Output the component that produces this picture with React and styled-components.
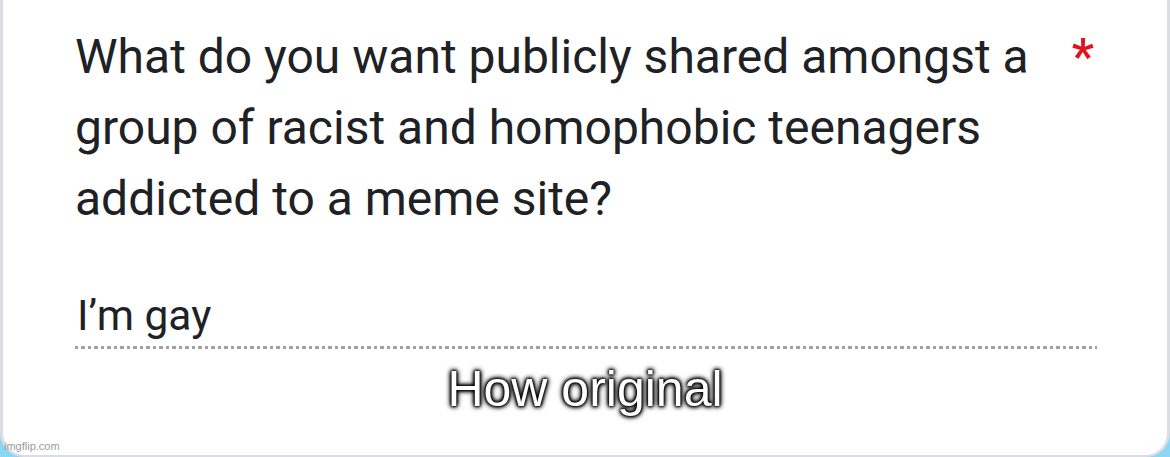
import styled, { createGlobalStyle } from "styled-components";

const GlobalStyle = createGlobalStyle`
  html, body {
    margin: 0;
    padding: 0;
    background: #8ad6f6;
  }
`;

const Page = styled.div`
  width: 1170px;
  height: 457px;
  background: #8ad6f6;
  overflow: hidden;
`;

const Card = styled.div`
  position: relative;
  box-sizing: border-box;
  width: 1170px;
  height: 457px;
  background: #ffffff;
  border-left: 3px solid #dcdde2;
  border-right: 3px solid #dcdde2;
  border-bottom: 2px solid #dcdde2;
  border-radius: 0 0 24px 24px;
  padding: 21px 70px 0 72px;
  font-family: Roboto, "Noto Sans", sans-serif;
  color: #202124;
`;

const QuestionRow = styled.div`
  display: flex;
  justify-content: space-between;
  align-items: flex-start;
`;

const Question = styled.h1`
  margin: 0;
  font-size: 48px;
  font-weight: 400;
  line-height: 71px;
  letter-spacing: 0;
`;

const Required = styled.span`
  color: #e0141e;
  font-size: 50px;
  font-weight: 500;
  line-height: 60px;
  margin-top: 6px;
  margin-right: 3px;
`;

const Answer = styled.div`
  margin-top: 58px;
  font-size: 42.5px;
  line-height: 48px;
  padding-bottom: 9px;
  padding-left: 2px;
  background-image: repeating-linear-gradient(
    to right,
    #a0a0a0 0,
    #a0a0a0 3.5px,
    transparent 3.5px,
    transparent 6.5px
  );
  background-size: 100% 3px;
  background-position: 0 100%;
  background-repeat: no-repeat;
`;

const Caption = styled.div`
  text-align: center;
  margin-top: 12px;
  margin-left: -72px;
  margin-right: -70px;
  font-family: "Liberation Sans", Arial, sans-serif;
  font-size: 50px;
  line-height: 56px;
  color: #ffffff;
  text-shadow: 0 0 2px #000, 0 0 3px #000, 0 0 4px #000, 0 0 5px #000,
    0 0 6px #000;
`;

const Watermark = styled.span`
  position: absolute;
  left: 1px;
  bottom: 3px;
  font-family: "Liberation Sans", Arial, sans-serif;
  font-size: 11px;
  color: #9b9b9b;
`;

export default function App() {
  return (
    <Page>
      <GlobalStyle />
      <Card>
        <QuestionRow>
          <Question>
            What do you want publicly shared amongst a
            <br />
            group of racist and homophobic teenagers
            <br />
            addicted to a meme site?
          </Question>
          <Required>*</Required>
        </QuestionRow>
        <Answer>I’m gay</Answer>
        <Caption>How original</Caption>
        <Watermark>imgflip.com</Watermark>
      </Card>
    </Page>
  );
}
